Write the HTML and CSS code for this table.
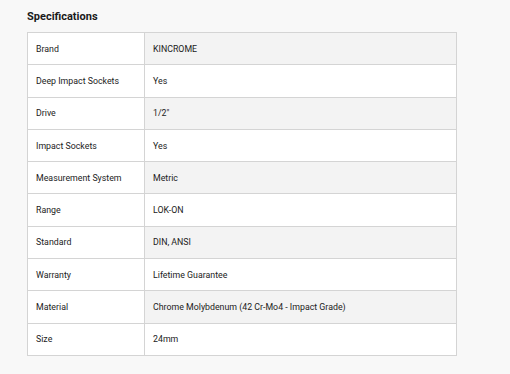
FILE: index.html
```html
<!DOCTYPE html>
<html lang="en">
<head>
<meta charset="utf-8">
<title>Specifications</title>
<link rel="stylesheet" href="styles.css">
</head>
<body>
<section class="specs">
  <h2 class="specs-title">Specifications</h2>
  <table class="specs-table">
    <colgroup>
      <col class="col-label">
      <col class="col-value">
    </colgroup>
    <tbody>
      <tr><td class="label">Brand</td><td class="value">KINCROME</td></tr>
      <tr><td class="label">Deep Impact Sockets</td><td class="value">Yes</td></tr>
      <tr><td class="label">Drive</td><td class="value">1/2"</td></tr>
      <tr><td class="label">Impact Sockets</td><td class="value">Yes</td></tr>
      <tr><td class="label">Measurement System</td><td class="value">Metric</td></tr>
      <tr><td class="label">Range</td><td class="value">LOK-ON</td></tr>
      <tr><td class="label">Standard</td><td class="value">DIN, ANSI</td></tr>
      <tr><td class="label">Warranty</td><td class="value">Lifetime Guarantee</td></tr>
      <tr><td class="label">Material</td><td class="value">Chrome Molybdenum (42 Cr-Mo4 - Impact Grade)</td></tr>
      <tr><td class="label">Size</td><td class="value">24mm</td></tr>
    </tbody>
  </table>
</section>
</body>
</html>
```

FILE: styles.css
```css
html, body {
  margin: 0;
  padding: 0;
  background: #f8f8f8;
}

body {
  font-family: Roboto, "Liberation Sans", sans-serif;
  color: #222;
}

.specs {
  padding: 10px 0 0 27px;
}

.specs-title {
  margin: 0 0 9px;
  font-size: 11px;
  line-height: 13px;
  font-weight: 700;
  color: #1a1a1a;
}

.specs-table {
  width: 430px;
  border-collapse: collapse;
  table-layout: fixed;
  font-size: 8.8px;
}

.col-label {
  width: 117px;
}

.specs-table tr {
  height: 32.3px;
}

.specs-table td {
  border: 1px solid #d4d4d4;
  padding: 0 8px;
  vertical-align: middle;
  background: #fff;
}

.specs-table tr:nth-child(odd) .value {
  background: #f3f3f3;
}
```
